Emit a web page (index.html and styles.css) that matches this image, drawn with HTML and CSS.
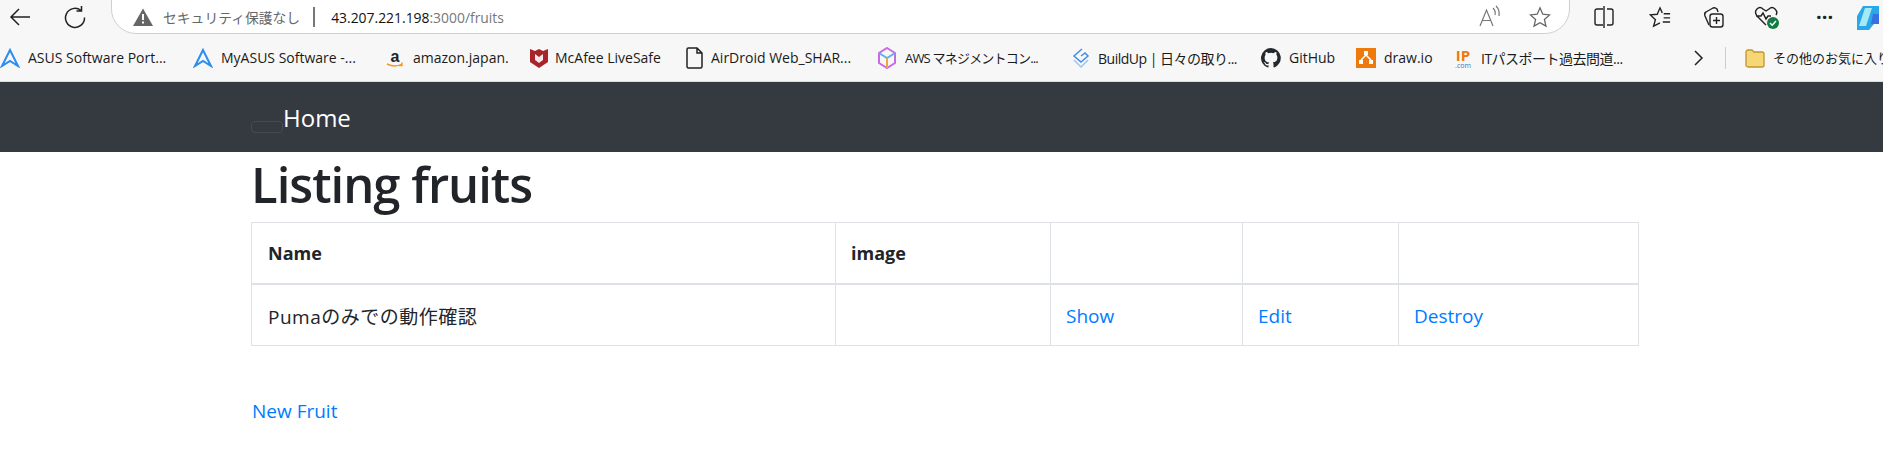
FILE: index.html
```html
<!DOCTYPE html>
<html lang="ja">
<head>
  <meta charset="UTF-8">
  <title>Listing fruits</title>
  <link rel="stylesheet" href="styles.css">
</head>
<body>
  <div class="toolbar">
    <svg class="tool tool-back" width="24" height="24" viewBox="0 0 24 24" fill="none" stroke="#222" stroke-width="1.5"><path d="M22 12H3M11 4l-8 8 8 8"/></svg>
    <svg class="tool tool-reload" width="24" height="24" viewBox="0 0 24 24" fill="none" stroke="#222" stroke-width="1.5"><path d="M18 5.5A9.5 9.5 0 1 0 21.5 12.5M18.5 1v5h-5"/></svg>
    <div class="address">
      <svg width="20" height="18" viewBox="0 0 20 18"><path d="M10 0.5L20 18H0z" fill="#666"/><path d="M9 6h2v6H9zM9 13.5h2v2H9z" fill="#fff"/></svg>
      <span class="insecure">セキュリティ保護なし</span>
      <span class="divider"></span>
      <span class="url"><b>43.207.221.198</b>:3000/fruits</span>
      <svg class="read-icon" width="22" height="24" viewBox="0 0 22 24" fill="none" stroke="#777" stroke-width="1.2"><path d="M1 21L7.5 5 14 21M3.5 15.5h8M14 3q3 3 2 7M17 1q4 4 3 10"/></svg>
      <svg class="star-icon" width="22" height="22" viewBox="0 0 24 24" fill="none" stroke="#666" stroke-width="1.4"><path d="M12 2l3 7 7.5.7-5.7 5 1.7 7.3-6.500-3.800L5.500 22l1.700-7.300-5.700-5L9 9z"/></svg>
    </div>
    <svg class="tool tool-split" width="20" height="22" viewBox="0 0 20 22" fill="none" stroke="#222" stroke-width="1.4"><path d="M9 3H3a2 2 0 0 0-2 2v12a2 2 0 0 0 2 2h6M13 3h4a2 2 0 0 1 2 2v12a2 2 0 0 1-2 2h-4M10 0v22"/></svg>
    <svg class="tool tool-fav" width="22" height="22" viewBox="0 0 24 24" fill="none" stroke="#222" stroke-width="1.5"><path d="M14.500 7.500L12 2 9 9l-7.500.7L7 15l-2 7 7-3.500M16 8.500h7M16 13h7M15 17.500h8"/></svg>
    <svg class="tool tool-coll" width="24" height="24" viewBox="0 0 24 24" fill="none" stroke="#222" stroke-width="1.4"><path d="M8 20L4 11q-1-3 1-4l7-4q2-1 4 1l1 3"/><rect x="9" y="9" width="13" height="13" rx="2.500"/><path d="M15.500 12v7M12 15.500h7"/></svg>
    <svg class="tool tool-health" width="26" height="26" viewBox="0 0 26 26"><path d="M12 21L3 12Q0 8 3 5t6 0l3 2 3-2q3-3 6 0t1 6M2 12h5l2-3 3 6 2-3h3" fill="none" stroke="#222" stroke-width="1.4"/><circle cx="19" cy="19" r="6" fill="#107c41"/><path d="M16 19l2.200 2.200L22 17" fill="none" stroke="#fff" stroke-width="1.500"/></svg>
    <span class="tool tool-more">···</span>
    <svg class="tool tool-copilot" width="22" height="26" viewBox="0 0 22 26"><path d="M6 2h16v12L12 26H0V12z" fill="#2aa7e8"/><path d="M8 4h7L9 22H2z" fill="#a6e9f5"/><path d="M16 10h6v10h-8z" fill="#3a6fe0"/></svg>
  </div>

  <div class="bookmarks">
    <a class="bookmark w-asus">
      <svg width="20" height="20" viewBox="0 0 20 20" fill="none" stroke="#2b8cf2" stroke-width="2"><path d="M10 2L2 18l8-5 8 5z"/></svg>
      <span>ASUS Software Port...</span>
    </a>
    <a class="bookmark w-myasus">
      <svg width="20" height="20" viewBox="0 0 20 20" fill="none" stroke="#2b8cf2" stroke-width="2"><path d="M10 2L2 18l8-5 8 5z"/></svg>
      <span>MyASUS Software -...</span>
    </a>
    <a class="bookmark w-amazon">
      <svg width="20" height="22" viewBox="0 0 20 22"><text class="amazon-a" x="10" y="15" text-anchor="middle">a</text><path d="M2 17q8 4 15 0M17 15.500v3h-3" fill="none" stroke="#f39a1f" stroke-width="1.400"/></svg>
      <span>amazon.japan.</span>
    </a>
    <a class="bookmark w-mcafee">
      <svg width="20" height="22" viewBox="0 0 20 22"><path d="M1 2l5 2 4-2 4 2 5-2v13l-9 6-9-6z" fill="#a8232a"/><path d="M6 7l4 3 4-3v6l-4 3-4-3z" fill="#f3e7e7"/></svg>
      <span>McAfee LiveSafe</span>
    </a>
    <a class="bookmark w-airdroid">
      <svg width="17" height="22" viewBox="0 0 17 22" fill="none" stroke="#222" stroke-width="1.500"><path d="M2.500 1H11l5 5v13.500a1.500 1.500 0 0 1-1.500 1.500h-12A1.500 1.500 0 0 1 1 19.500v-17A1.500 1.500 0 0 1 2.500 1zM11 1v5h5"/></svg>
      <span>AirDroid Web_SHAR...</span>
    </a>
    <a class="bookmark w-aws">
      <svg width="20" height="22" viewBox="0 0 20 22" fill="none" stroke-width="2"><path d="M10 1l8 5v10l-8 5-8-5V6z" stroke="#c86ae0"/><path d="M2 6l8 5 8-5" stroke="#5ab4f0"/><path d="M10 11v10" stroke="#f5a04a"/></svg>
      <span class="tight-aws">AWS マネジメントコン...</span>
    </a>
    <a class="bookmark w-buildup">
      <svg width="18" height="20" viewBox="0 0 18 20" fill="none" stroke="#3f8fe8" stroke-width="1.500"><path d="M10 1L2 8l7 6 7-6-3-3-4 3"/><path d="M2 12l7 7 7-7" stroke="#9cc6f2"/></svg>
      <span class="tight">BuildUp | 日々の取り...</span>
    </a>
    <a class="bookmark w-github">
      <svg width="20" height="20" viewBox="0 0 16 16" fill="#24292e"><path d="M8 0a8 8 0 0 0-2.500 15.600c.4.1.5-.2.5-.4v-1.400c-2.200.5-2.700-1-2.700-1-.4-.9-.9-1.200-.9-1.200-.7-.5.1-.5.1-.5.800.1 1.200.8 1.200.8.700 1.200 1.900.9 2.300.7.100-.5.300-.9.500-1.100-1.800-.2-3.600-.9-3.600-4 0-.9.300-1.600.8-2.100-.1-.2-.4-1 .1-2.100 0 0 .7-.2 2.200.8a7.600 7.600 0 0 1 4 0c1.500-1 2.200-.8 2.200-.8.400 1.100.2 1.900.1 2.100.5.600.8 1.300.8 2.100 0 3.100-1.900 3.700-3.700 3.900.3.300.6.800.6 1.500v2.200c0 .2.100.5.600.4A8 8 0 0 0 8 0z"/></svg>
      <span>GitHub</span>
    </a>
    <a class="bookmark w-drawio">
      <svg width="20" height="20" viewBox="0 0 20 20"><rect width="20" height="20" fill="#ee7a0c"/><path d="M8 3h4v4h-4zM3 12h4v4H3zM13 12h4v4h-4z" fill="#fff"/><path d="M10 7l-5 5M10 7l5 5" stroke="#fff" stroke-width="1.500"/></svg>
      <span>draw.io</span>
    </a>
    <a class="bookmark w-ip">
      <span class="ip-icon"><b>IP</b><i>.com</i></span>
      <span class="tight">ITパスポート過去問道...</span>
    </a>
    <svg class="more-chevron" width="12" height="18" viewBox="0 0 12 18" fill="none" stroke="#222" stroke-width="1.500"><path d="M2 2l7 7-7 7"/></svg>
    <span class="bm-sep"></span>
    <a class="bookmark bm-other">
      <svg width="20" height="20" viewBox="0 0 20 20"><path d="M1 4a2 2 0 0 1 2-2h4l2 2h8a2 2 0 0 1 2 2v11a2 2 0 0 1-2 2H3a2 2 0 0 1-2-2z" fill="#f6d776" stroke="#c2952c" stroke-width="1.300"/></svg>
      <span class="other-text">その他のお気に入り</span>
    </a>
  </div>

  <nav class="navbar">
    <div class="container nav-inner">
      <button class="toggler" type="button"></button>
      <a class="nav-home">Home</a>
    </div>
  </nav>

  <main class="container">
    <h1 class="title">Listing fruits</h1>
    <table class="fruits">
      <colgroup>
        <col class="col-name"><col class="col-image"><col class="col-show"><col class="col-edit"><col class="col-destroy">
      </colgroup>
      <thead>
        <tr><th>Name</th><th>image</th><th></th><th></th><th></th></tr>
      </thead>
      <tbody>
        <tr>
          <td class="fruit-name">Pumaのみでの動作確認</td>
          <td></td>
          <td><a class="link">Show</a></td>
          <td><a class="link">Edit</a></td>
          <td><a class="link">Destroy</a></td>
        </tr>
      </tbody>
    </table>
    <p class="new-link"><a class="link">New Fruit</a></p>
  </main>
</body>
</html>
```

FILE: styles.css
```css
* {
  box-sizing: border-box;
}

body {
  margin: 0;
  font-family: "Open Sans", "Noto Sans CJK JP", sans-serif;
  color: #212529;
  background: #fff;
  overflow: hidden;
}

/* browser chrome */
.toolbar {
  display: flex;
  align-items: center;
  height: 34px;
  background: #f7f7f7;
  overflow: hidden;
}

.tool {
  flex: none;
}

.tool-back {
  margin-left: 8px;
}

.tool-reload {
  margin-left: 31px;
}

.address {
  display: flex;
  align-items: center;
  flex: none;
  width: 1459px;
  height: 50px;
  margin: -16px 0 0 24px;
  padding: 16px 0 0 21px;
  background: #fff;
  border: 1px solid #cfcfcf;
  border-radius: 0 0 25px 25px;
  font-size: 14px;
}

.insecure {
  margin-left: 10px;
  color: #666;
  font-size: 13.800px;
}

.divider {
  width: 2px;
  height: 20px;
  margin: 0 16px 0 13px;
  background: #777;
}

.url {
  color: #777;
  font-size: 13.900px;
}

.url b {
  color: #111;
  font-weight: 400;
}

.read-icon {
  margin-left: auto;
}

.star-icon {
  margin: 0 18px 0 28px;
}

.tool-split {
  margin-left: 24px;
}

.tool-fav {
  margin-left: 35px;
}

.tool-coll {
  margin-left: 30px;
}

.tool-health {
  margin-left: 29px;
}

.tool-more {
  margin-left: 36px;
  font-size: 20px;
  line-height: 1;
  font-weight: 700;
  color: #222;
}

.tool-copilot {
  margin-left: 24px;
}

.bookmarks {
  display: flex;
  align-items: center;
  height: 48px;
  background: #f7f7f7;
  border-bottom: 1px solid #dcdcdc;
  font-size: 14px;
  overflow: hidden;
}

.bookmark {
  display: flex;
  align-items: center;
  gap: 8px;
  flex: none;
  color: #1a1a1a;
  white-space: nowrap;
}

.bookmark svg {
  flex: none;
}

.amazon-a {
  font-family: "Liberation Sans", sans-serif;
  font-size: 16px;
  font-weight: 700;
  fill: #222;
}

.tight {
  letter-spacing: -0.5px;
}

.tight-aws {
  font-size: 13px;
  letter-spacing: -0.8px;
}

.other-text {
  font-size: 13px;
}

.w-asus { width: 193px; }
.w-myasus { width: 192px; }
.w-amazon { width: 144px; }
.w-mcafee { width: 157px; }
.w-airdroid { width: 191px; }
.w-aws { width: 195px; }
.w-buildup { width: 189px; }
.w-github { width: 95px; }
.w-drawio { width: 97px; }
.w-ip { width: 240px; }

.w-mcafee { gap: 6px; }

.ip-icon {
  display: flex;
  flex-direction: column;
  align-items: center;
  width: 20px;
  height: 20px;
  line-height: 1;
}

.ip-icon b {
  color: #ee7a0c;
  font-size: 15px;
  line-height: 14px;
}

.ip-icon i {
  color: #3a78c2;
  font-size: 7px;
  font-style: normal;
}

.more-chevron {
  flex: none;
}

.bm-sep {
  flex: none;
  width: 1px;
  height: 22px;
  margin: 0 19px 0 20px;
  background: #ccc;
}

/* page */
.container {
  width: 1387px;
  margin-left: 251px;
}

.navbar {
  height: 70px;
  background: #343a40;
}

.nav-inner {
  display: flex;
  align-items: flex-start;
}

.toggler {
  width: 32px;
  height: 12px;
  margin-top: 39px;
  padding: 0;
  background: transparent;
  border: 1px solid #454b51;
  border-radius: 4px;
}

.nav-home {
  margin-top: 20px;
  color: #fff;
  font-size: 24px;
  line-height: 32px;
}

.title {
  margin: 0 0 6px;
  padding-top: 1px;
  font-size: 49px;
  line-height: 63px;
  font-weight: 600;
  letter-spacing: -1px;
}

.fruits {
  width: 1387px;
  table-layout: fixed;
  border-collapse: collapse;
  font-size: 19px;
}

.col-name { width: 584px; }
.col-image { width: 215px; }
.col-show { width: 192px; }
.col-edit { width: 156px; }
.col-destroy { width: 240px; }

.fruits th,
.fruits td {
  height: 61px;
  padding: 0 15px;
  border: 1px solid #dee2e6;
  text-align: left;
  vertical-align: middle;
}

.fruits th {
  font-size: 18px;
  font-weight: 700;
  border-bottom-width: 2px;
}

.fruits td {
  height: 62px;
  padding-top: 3px;
}

.fruits th:first-child,
.fruits td:first-child {
  padding-left: 16px;
}

.fruit-name {
  letter-spacing: 0.5px;
  padding-top: 1px;
}

.link {
  color: #007bff;
}

.new-link {
  margin: 51px 0 0;
  padding-left: 1px;
  font-size: 19px;
  line-height: 28px;
}
```
